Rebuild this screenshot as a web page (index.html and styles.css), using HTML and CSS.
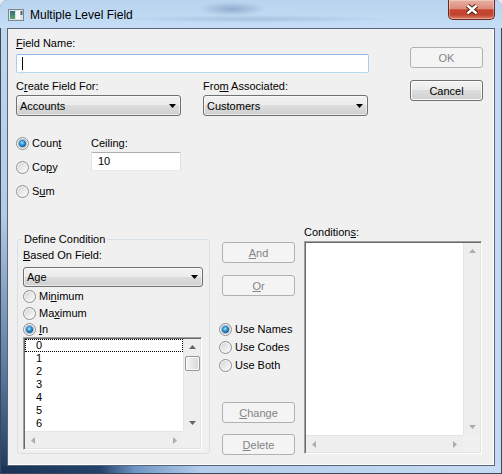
FILE: index.html
```html
<!DOCTYPE html>
<html lang="en">
<head>
    <meta charset="UTF-8">
    <title>Multiple Level Field</title>
    <link rel="stylesheet" href="styles.css">
</head>
<body>
<div class="window">
    <div class="titlebar">
        <svg class="app-icon" width="16" height="12" viewBox="0 0 16 12">
            <defs>
                <linearGradient id="ig" x1="0" y1="0" x2="0" y2="1">
                    <stop offset="0" stop-color="#2f6f7a"/>
                    <stop offset="1" stop-color="#5fa46c"/>
                </linearGradient>
            </defs>
            <rect x="0.5" y="0.5" width="15" height="11" fill="#dfe3e7" stroke="#7d868e"/>
            <rect x="2" y="2" width="5" height="8" fill="url(#ig)"/>
            <rect x="8" y="2" width="4" height="8" fill="#f7f8f9"/>
            <rect x="12.5" y="2" width="2" height="4" fill="#56626c"/>
        </svg>
        <span class="title">Multiple Level Field</span>
        <div class="close">
            <svg width="14" height="11" viewBox="0 0 14 11">
                <path d="M2.5 1.5L11.5 9.5M11.5 1.5L2.5 9.5" stroke="#4b1a12" stroke-width="4.4"/>
                <path d="M2.5 1.5L11.5 9.5M11.5 1.5L2.5 9.5" stroke="#fff" stroke-width="2.4"/>
            </svg>
        </div>
    </div>

    <div class="client">
        <div class="top">
            <div class="top-fields">
                <label class="lbl lbl-field"><u>F</u>ield Name:</label>
                <div class="textbox field-name"><span class="caret"></span></div>
                <div class="pair">
                    <div class="pair-col">
                        <label class="lbl">C<u>r</u>eate Field For:</label>
                        <div class="combo"><span>Accounts</span><svg class="arr" width="7" height="4" viewBox="0 0 7 4"><path d="M0 0h7L3.5 4z"/></svg></div>
                    </div>
                    <div class="pair-col">
                        <label class="lbl">Fro<u>m</u> Associated:</label>
                        <div class="combo"><span>Customers</span><svg class="arr" width="7" height="4" viewBox="0 0 7 4"><path d="M0 0h7L3.5 4z"/></svg></div>
                    </div>
                </div>
            </div>
            <div class="top-buttons">
                <div class="btn disabled">OK</div>
                <div class="btn">Cancel</div>
            </div>
        </div>

        <div class="mode">
            <div class="mode-radios">
                <div class="radio"><span class="rb on"></span><span>Coun<u>t</u></span></div>
                <div class="radio"><span class="rb"></span><span>Co<u>p</u>y</span></div>
                <div class="radio"><span class="rb"></span><span>S<u>u</u>m</span></div>
            </div>
            <div class="ceiling">
                <label class="lbl">Ceiling:</label>
                <div class="textbox">10</div>
            </div>
        </div>

        <div class="lower">
            <fieldset class="group">
                <legend>Define Condition</legend>
                <label class="lbl"><u>B</u>ased On Field:</label>
                <div class="combo combo-age"><span>Age</span><svg class="arr" width="7" height="4" viewBox="0 0 7 4"><path d="M0 0h7L3.5 4z"/></svg></div>
                <div class="radio r-min"><span class="rb"></span><span>Mi<u>n</u>imum</span></div>
                <div class="radio r-max"><span class="rb"></span><span>Ma<u>x</u>imum</span></div>
                <div class="radio r-in"><span class="rb on"></span><span><u>I</u>n</span></div>
                <div class="listbox values">
                    <div class="items">
                        <div class="item focus">0</div>
                        <div class="item">1</div>
                        <div class="item">2</div>
                        <div class="item">3</div>
                        <div class="item">4</div>
                        <div class="item">5</div>
                        <div class="item">6</div>
                    </div>
                    <div class="vsb">
                        <div class="sb-btn"><svg width="7" height="4" viewBox="0 0 7 4"><path d="M0 4h7L3.5 0z"/></svg></div>
                        <div class="thumb"></div>
                        <div class="sb-space"></div>
                        <div class="sb-btn"><svg width="7" height="4" viewBox="0 0 7 4"><path d="M0 0h7L3.5 4z"/></svg></div>
                    </div>
                    <div class="hsb off">
                        <div class="sb-btn"><svg width="4" height="7" viewBox="0 0 4 7"><path d="M4 0v7L0 3.5z"/></svg></div>
                        <div class="sb-space"></div>
                        <div class="sb-btn"><svg width="4" height="7" viewBox="0 0 4 7"><path d="M0 0v7L4 3.5z"/></svg></div>
                    </div>
                    <div class="sb-corner"></div>
                </div>
            </fieldset>

            <div class="mid">
                <div class="btn disabled"><span><u>A</u>nd</span></div>
                <div class="btn disabled btn-or"><span><u>O</u>r</span></div>
                <div class="use-group">
                    <div class="radio"><span class="rb on"></span><span>Use Names</span></div>
                    <div class="radio"><span class="rb"></span><span>Use Codes</span></div>
                    <div class="radio"><span class="rb"></span><span>Use Both</span></div>
                </div>
                <div class="btn disabled btn-change"><span><u>C</u>hange</span></div>
                <div class="btn disabled btn-delete"><span><u>D</u>elete</span></div>
            </div>

            <div class="conditions">
                <label class="lbl">Condition<u>s</u>:</label>
                <div class="listbox cond-list">
                    <div class="items"></div>
                    <div class="vsb off">
                        <div class="sb-btn"><svg width="7" height="4" viewBox="0 0 7 4"><path d="M0 4h7L3.5 0z"/></svg></div>
                        <div class="sb-space"></div>
                        <div class="sb-btn"><svg width="7" height="4" viewBox="0 0 7 4"><path d="M0 0h7L3.5 4z"/></svg></div>
                    </div>
                    <div class="hsb off">
                        <div class="sb-btn"><svg width="4" height="7" viewBox="0 0 4 7"><path d="M4 0v7L0 3.5z"/></svg></div>
                        <div class="sb-space"></div>
                        <div class="sb-btn"><svg width="4" height="7" viewBox="0 0 4 7"><path d="M0 0v7L4 3.5z"/></svg></div>
                    </div>
                    <div class="sb-corner"></div>
                </div>
            </div>
        </div>
    </div>
</div>
</body>
</html>
```

FILE: styles.css
```css
* { box-sizing: border-box; }
body { margin: 0; background: #e8edf3; font-family: "Liberation Sans", Arial, sans-serif; font-size: 11px; color: #000; }
u { text-decoration: underline; text-underline-offset: 1px; }

/* window frame */
.window {
    width: 502px; height: 474px;
    display: flex; flex-direction: column;
    border-radius: 7px 7px 0 0; overflow: hidden;
    box-shadow: inset 0 0 0 1px #39485a;
    background:
        linear-gradient(to right, #1b3356 0, #24436b 20%, #6f95c4 27%, #b3cdea 40%, #c6dcf3 100%) no-repeat left bottom / 100% 8px,
        linear-gradient(to bottom, #c2d8ef 0, #b4cbe4 45%, #56759c 80%, #1e375a 100%) no-repeat left top / 7px 100%,
        #c3daf2;
}
.titlebar {
    height: 28px; flex: none;
    display: flex; align-items: flex-start;
    padding-left: 8px;
    background:
        radial-gradient(ellipse 34px 7px at 232px 9px, rgba(110, 140, 178, .55), transparent),
        radial-gradient(ellipse 140px 4px at 255px 19px, rgba(130, 160, 198, .4), transparent),
        linear-gradient(#b9d4ef, #c5ddf6);
}
.app-icon { margin-top: 9px; flex: none; }
.title { margin: 8px 0 0 6px; font-size: 12px; line-height: 14px; }
.close {
    margin-left: auto; margin-right: 7px;
    width: 47px; height: 20px;
    display: flex; align-items: center; justify-content: center;
    border: 1px solid #6e2a22; border-top: none;
    border-radius: 0 0 5px 5px;
    background: linear-gradient(#eab0a2 0, #dc8d7c 45%, #c8452f 52%, #c04530 78%, #dc8266 100%);
    box-shadow: inset 0 0 0 1px rgba(255, 255, 255, .3);
}

.client {
    flex: 1;
    margin: 0 7px 8px;
    border: 1px solid #586577;
    background: #f0f0f0;
    box-shadow: inset -1px -1px 0 #fff;
}

/* common controls */
.lbl { display: block; height: 13px; line-height: 13px; white-space: nowrap; }
.textbox {
    height: 19px; line-height: 17px;
    padding: 0 5px;
    background: #fff;
    border: 1px solid; border-color: #abadb3 #dbdfe6 #e3e9ef #e2e3ea;
    border-radius: 2px;
}
.combo {
    height: 21px;
    display: flex; align-items: center; justify-content: space-between;
    padding: 0 4px 0 3px;
    border: 1px solid #707070; border-radius: 3px;
    background: linear-gradient(#f2f2f2 0, #ebebeb 50%, #dddddd 50%, #cfcfcf 100%);
    box-shadow: inset 0 0 0 1px rgba(255, 255, 255, .55);
}
.arr { fill: #000; }
.btn {
    height: 21px;
    display: flex; align-items: center; justify-content: center;
    border: 1px solid #707070; border-radius: 3px;
    background: linear-gradient(#f2f2f2 0, #ebebeb 50%, #dddddd 50%, #cfcfcf 100%);
    box-shadow: inset 0 0 0 1px #fcfcfc;
}
.btn.disabled { border-color: #adb2b5; background: #f4f4f4; color: #838383; box-shadow: none; }

.radio { display: flex; align-items: center; gap: 3px; height: 13px; line-height: 13px; white-space: nowrap; }
.rb {
    width: 13px; height: 13px; flex: none;
    display: flex; align-items: center; justify-content: center;
    border: 1px solid #8e8f8f; border-radius: 50%;
    background: linear-gradient(135deg, #cdcdcd 0, #e9e9e9 50%, #fdfdfd 100%);
    box-shadow: inset 0 0 0 1px #f6f6f6;
}
.rb.on::after {
    content: ""; width: 7px; height: 7px; border-radius: 50%;
    background: radial-gradient(circle at 45% 40%, #bfe9fb 0, #3ea6e0 30%, #17619e 65%, #0d3d6c 100%);
    box-shadow: 0 0 0 1px rgba(40, 90, 140, .35);
}

/* top area */
.top { display: flex; padding-left: 8px; }
.top-fields { width: 353px; }
.lbl-field { margin-top: 8px; }
.field-name {
    margin-top: 4px;
    display: flex; align-items: center;
    border-color: #8fb9e6 #a7cdef #b7d9ed #a7cdef;
}
.caret { width: 1px; height: 13px; background: #000; }
.pair { display: flex; gap: 22px; margin-top: 7px; }
.pair-col { width: 165px; }
.pair-col .combo { margin-top: 2px; }
.top-buttons { margin-left: 41px; width: 73px; padding-top: 18px; display: flex; flex-direction: column; gap: 12px; }

/* count / copy / sum */
.mode { display: flex; margin-top: 21px; padding-left: 8px; }
.mode-radios { width: 75px; display: flex; flex-direction: column; gap: 11px; }
.ceiling { width: 90px; }
.ceiling .textbox { margin-top: 2px; padding-left: 6px; }

/* lower area */
.lower { display: flex; align-items: flex-start; margin-top: 28px; padding-left: 9px; }
.group {
    margin: 7px 0 0; padding: 3px 6px 3px 5px;
    width: 193px; height: 221px; min-width: 0;
    border: 1px solid #d5dfe5; border-radius: 3px;
}
.group legend { padding: 0 2px; margin-left: -1px; line-height: 13px; }
.combo-age { height: 20px; margin-top: 5px; }
.r-min { margin-top: 3px; }
.r-max { margin-top: 4px; }
.r-in { margin-top: 3px; }

.listbox {
    display: grid;
    grid-template-columns: 1fr 17px;
    grid-template-rows: 1fr 17px;
    padding: 1px;
    background: #fff;
    border: 1px solid; border-color: #a0a0a0 #fff #fff #a0a0a0;
    box-shadow: inset 1px 1px 0 #696969, inset -1px -1px 0 #e3e3e3;
}
.values { width: 179px; height: 113px; margin-top: 1px; }
.items { overflow: hidden; }
.item { height: 13px; line-height: 13px; padding-left: 11px; }
.item.focus { outline: 1px dotted #000; outline-offset: -1px; }

.vsb, .hsb { display: flex; background: #eeeeee; color: #666; }
.vsb { flex-direction: column; align-items: center; border-left: 1px solid #e4e4e4; }
.hsb { align-items: center; border-top: 1px solid #e4e4e4; }
.off { color: #adadad; }
.sb-btn { width: 16px; height: 16px; flex: none; display: flex; align-items: center; justify-content: center; }
.sb-btn svg { fill: currentColor; }
.sb-space { flex: 1; }
.thumb {
    width: 15px; height: 15px; margin-top: 1px; flex: none;
    border: 1px solid #979797; border-radius: 2px;
    background: linear-gradient(to right, #f5f5f5, #e7e7e7 50%, #d8d8d8);
    box-shadow: inset 0 0 0 1px #fbfbfb;
}
.sb-corner { background: #f0f0f0; }

.mid { margin-left: 12px; width: 73px; padding-top: 16px; display: flex; flex-direction: column; }
.btn-or { margin-top: 12px; }
.use-group { margin: 24px 0 0 -3px; }
.use-group .radio { height: 18px; }
.btn-change { margin-top: 28px; }
.btn-delete { margin-top: 11px; }

.conditions { margin-left: 9px; width: 178px; }
.cond-list { height: 213px; margin-top: 2px; }
```
